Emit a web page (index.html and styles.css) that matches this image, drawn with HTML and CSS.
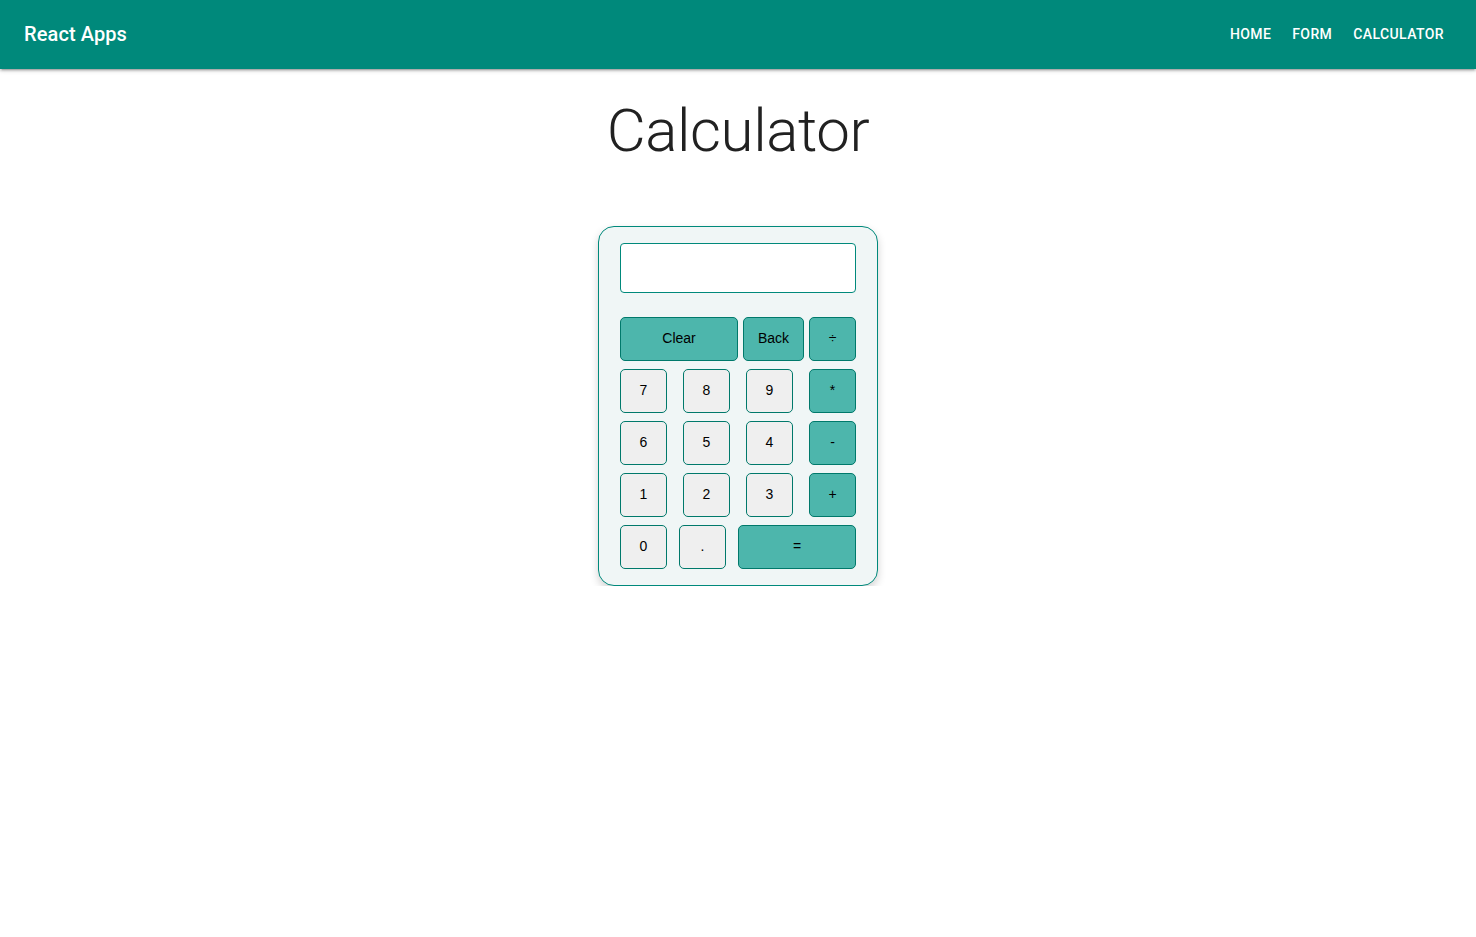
FILE: index.html
```html
<!DOCTYPE html>
<html lang="en">
<head>
<meta charset="utf-8">
<title>React Apps</title>
<link rel="stylesheet" href="styles.css">
</head>
<body>
<header class="navbar">
  <div class="brand">React Apps</div>
  <nav class="links">
    <a class="link" href="#">HOME</a>
    <a class="link" href="#">FORM</a>
    <a class="link" href="#">CALCULATOR</a>
  </nav>
</header>
<main class="page">
  <h1 class="title">Calculator</h1>
  <div class="calc">
    <div class="display"></div>
    <div class="row first">
      <button class="key op wide">Clear</button>
      <button class="key op mid">Back</button>
      <button class="key op">÷</button>
    </div>
    <div class="row">
      <button class="key">7</button>
      <button class="key">8</button>
      <button class="key">9</button>
      <button class="key op">*</button>
    </div>
    <div class="row">
      <button class="key">6</button>
      <button class="key">5</button>
      <button class="key">4</button>
      <button class="key op">-</button>
    </div>
    <div class="row">
      <button class="key">1</button>
      <button class="key">2</button>
      <button class="key">3</button>
      <button class="key op">+</button>
    </div>
    <div class="row">
      <button class="key">0</button>
      <button class="key">.</button>
      <button class="key op wide">=</button>
    </div>
  </div>
</main>
</body>
</html>
```
FILE: styles.css
```css
* { box-sizing: border-box; }
html, body { margin: 0; padding: 0; background: #fff; }
body { font-family: Roboto, "Liberation Sans", sans-serif; }

.navbar {
  height: 69px;
  background: #00897b;
  display: flex;
  align-items: center;
  justify-content: space-between;
  padding: 0 32px 2px 24px;
  box-shadow: 0 2px 2px 0 rgba(0,0,0,0.14), 0 3px 1px -2px rgba(0,0,0,0.12), 0 1px 5px 0 rgba(0,0,0,0.2);
  position: relative;
}
.brand {
  color: #fff;
  font-size: 20px;
  font-weight: 500;
  letter-spacing: 0.1px;
}
.links { display: flex; align-items: center; gap: 21px; }
.link {
  color: #fff;
  text-decoration: none;
  font-size: 14px;
  font-weight: 500;
  letter-spacing: 0.4px;
}

.page { display: flex; flex-direction: column; align-items: center; }
.title {
  margin: 26px 0 0;
  font-size: 60px;
  font-weight: 300;
  color: #212121;
  line-height: 72px;
  letter-spacing: -0.4px;
}

.calc {
  margin-top: 59px;
  width: 280px;
  padding: 16px 21px 16px 21px;
  background: #f0f6f6;
  border: 1px solid #00897b;
  border-radius: 16px;
  box-shadow: 0 4px 8px rgba(0,0,0,0.18);
  display: flex;
  flex-direction: column;
  gap: 8px;
}
.display {
  height: 50px;
  background: #fff;
  border: 1px solid #00897b;
  border-radius: 4px;
  margin-bottom: 16px;
}
.row { display: flex; justify-content: space-between; }
.key {
  width: 47px;
  height: 44px;
  background: #efefef;
  border: 1px solid #00796b;
  border-radius: 5px;
  font-family: "Liberation Sans", Arial, sans-serif;
  font-size: 14px;
  color: #000;
  padding: 0 0 2px;
  margin: 0;
}
.key.op { background: #4db6ac; }
.key.wide { width: 118px; }
.key.mid { width: 61px; }
```
